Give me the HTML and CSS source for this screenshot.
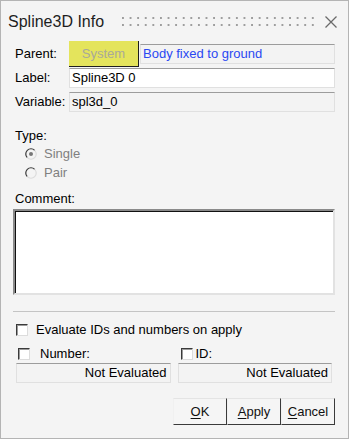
FILE: index.html
```html
<!DOCTYPE html>
<html lang="en">

<head>
    <meta charset="UTF-8">
    <meta name="viewport" content="width=device-width, initial-scale=1.0">
    <title>Spline3D Info</title>
    <link rel="stylesheet" href="styles.css">
</head>

<body>
    <div class="window">
        <div class="titlebar">
            <div class="title">Spline3D Info</div>
            <div class="grip"></div>
            <div class="close">
                <svg width="12" height="12" viewBox="0 0 12 12">
                    <path d="M0.5 0.5 L11.5 11.5 M11.5 0.5 L0.5 11.5" stroke="#6a6a6a" stroke-width="1.3" fill="none" />
                </svg>
            </div>
        </div>
        <div class="content">
            <div class="row row-parent">
                <span class="lbl">Parent:</span>
                <span class="pick">System</span>
                <span class="field field-off link">Body fixed to ground</span>
            </div>
            <div class="row row-label">
                <span class="lbl">Label:</span>
                <span class="field">Spline3D 0</span>
            </div>
            <div class="row row-var">
                <span class="lbl">Variable:</span>
                <span class="field field-off">spl3d_0</span>
            </div>

            <div class="caption cap-type">Type:</div>
            <div class="radio">
                <svg width="12" height="12" viewBox="0 0 12 12">
                    <circle cx="6" cy="6" r="5" fill="#f4f4f4" />
                    <path d="M2.3 9.7 A5.2 5.2 0 0 1 9.7 2.3" stroke="#3a3a3a" stroke-width="1.2" fill="none" />
                    <path d="M9.7 2.3 A5.2 5.2 0 0 1 2.3 9.7" stroke="#dcdcdc" stroke-width="1.2" fill="none" />
                    <circle cx="6" cy="6" r="2" fill="#777" />
                </svg>
                <span>Single</span>
            </div>
            <div class="radio">
                <svg width="12" height="12" viewBox="0 0 12 12">
                    <circle cx="6" cy="6" r="5" fill="#f4f4f4" />
                    <path d="M2.3 9.7 A5.2 5.2 0 0 1 9.7 2.3" stroke="#3a3a3a" stroke-width="1.2" fill="none" />
                    <path d="M9.7 2.3 A5.2 5.2 0 0 1 2.3 9.7" stroke="#dcdcdc" stroke-width="1.2" fill="none" />
                </svg>
                <span>Pair</span>
            </div>

            <div class="caption cap-comment">Comment:</div>
            <div class="comment"></div>

            <div class="sep"></div>

            <div class="check check-eval"><span class="box"></span>Evaluate IDs and numbers on apply</div>

            <div class="eval">
                <div class="eval-col">
                    <div class="check check-sub"><span class="box"></span>Number:</div>
                    <div class="field field-off result">Not Evaluated</div>
                </div>
                <div class="eval-col">
                    <div class="check check-sub"><span class="box"></span>ID:</div>
                    <div class="field field-off result">Not Evaluated</div>
                </div>
            </div>

            <div class="buttons">
                <div class="btn"><u>O</u>K</div>
                <div class="btn"><u>A</u>pply</div>
                <div class="btn"><u>C</u>ancel</div>
            </div>
        </div>
    </div>
</body>

</html>
```

FILE: styles.css
```css
body {
    margin: 0;
    font-family: "Liberation Sans", Arial, sans-serif;
    font-size: 13px;
    line-height: 16px;
    color: #000;
}

.window {
    width: 349px;
    height: 439px;
    box-sizing: border-box;
    border: 1px solid #b4b4b4;
    background-color: #f4f4f4;
}

/* title bar */
.titlebar {
    height: 40px;
    display: flex;
    align-items: center;
    padding-left: 7px;
}

.title {
    width: 114px;
    font-size: 16px;
    color: #1e1e1e;
    margin-top: 1px;
}

.grip {
    width: 192px;
    height: 9px;
    margin-top: 1px;
    background-image: radial-gradient(circle at 1px 1px, #9e9e9e 1px, transparent 1.4px);
    background-size: 7.6px 7px;
}

.close {
    margin-left: 11px;
    width: 12px;
    height: 12px;
    display: flex;
    margin-top: 2px;
}

/* form */
.content {
    padding: 0 13px 0 14px;
}

.row {
    display: flex;
    align-items: center;
}

.lbl {
    width: 54px;
    flex: none;
}

.row-parent {
    height: 26px;
}

.row-label {
    margin-top: 1px;
}

.row-var {
    margin-top: 4px;
}

.pick {
    width: 70px;
    height: 26px;
    box-sizing: border-box;
    display: flex;
    align-items: center;
    justify-content: center;
    background-color: #e4e45c;
    border-right: 1px solid #1e1e1e;
    border-bottom: 1px solid #1e1e1e;
    color: #a9a99a;
}

.field {
    flex: 1;
    height: 20px;
    box-sizing: border-box;
    display: flex;
    align-items: center;
    padding-left: 2px;
    background-color: #fff;
    border: 1px solid #e0e0e0;
    border-top-color: #9c9c9c;
}

.field-off {
    background-color: #f3f3f3;
}

.row-parent .field {
    margin-left: 1px;
}

.link {
    color: #2a48f2;
}

.caption {
    height: 16px;
}

.cap-type {
    margin-top: 16px;
}

.radio {
    height: 19px;
    display: flex;
    align-items: center;
    padding-left: 10px;
    color: #808080;
}

.radio svg {
    margin-right: 7px;
}

.cap-comment {
    margin-top: 9px;
}

.comment {
    margin: 2px 0 0 -2px;
    height: 86px;
    box-sizing: border-box;
    background-color: #fff;
    border: 2px solid #e2e2e2;
    border-top-color: #8a8a8a;
    border-left-color: #8a8a8a;
    box-shadow: inset 1px 1px 0 #111;
}

.sep {
    margin: 16px 0 0 -2px;
    height: 1px;
    background-color: #c4c4c4;
}

/* checkboxes */
.check {
    display: flex;
    align-items: center;
    height: 16px;
}

.box {
    width: 12px;
    height: 12px;
    box-sizing: border-box;
    background-color: #fff;
    border: 1px solid #dcdcdc;
    border-top-color: #3a3a3a;
    border-left-color: #3a3a3a;
    box-shadow: inset 1px 1px 0 #9a9a9a;
}

.check-eval {
    margin: 10px 0 0 1px;
}

.check-eval .box {
    margin-right: 8px;
}

.eval {
    margin: 8px 3px 0 1px;
    display: flex;
    gap: 7px;
}

.eval-col {
    flex: 1;
}

.check-sub {
    padding-left: 2px;
}

.check-sub .box {
    margin-right: 10px;
}

.eval-col + .eval-col .check-sub {
    padding-left: 3px;
}

.eval-col + .eval-col .check-sub .box {
    margin-right: 3px;
}

.result {
    margin-top: 1px;
    justify-content: flex-end;
    padding-right: 3px;
}

/* buttons */
.buttons {
    margin-top: 15px;
    display: flex;
    justify-content: flex-end;
}

.btn {
    width: 54px;
    height: 27px;
    box-sizing: border-box;
    display: flex;
    align-items: center;
    justify-content: center;
    background-color: #f5f5f5;
    border-top: 1px solid #e4e4e4;
    border-left: 1px solid #f0f0f0;
    border-right: 1px solid #3a3a3a;
    border-bottom: 1px solid #3a3a3a;
    color: #111;
}

.btn u {
    text-decoration-thickness: 1px;
    text-underline-offset: 2px;
}
```
